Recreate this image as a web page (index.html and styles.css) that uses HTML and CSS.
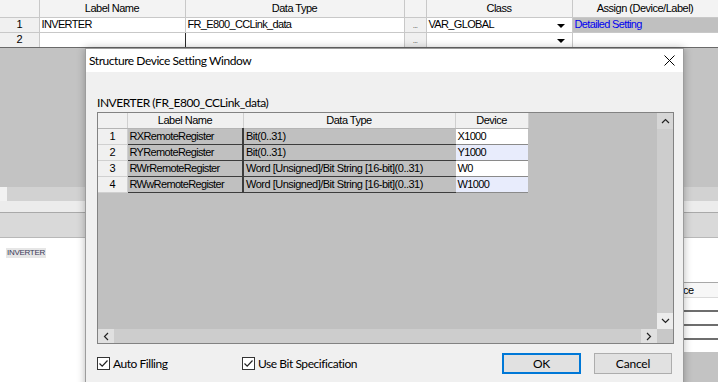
FILE: index.html
```html
<!DOCTYPE html>
<html>
<head lang="en">
  <meta charset="UTF-8">
  <title>Structure Device Setting Window</title>
  <link rel="stylesheet" href="styles.css">
</head>
<body>
<div class="app">
  <table class="labels">
    <colgroup>
      <col style="width:39px"><col style="width:146px"><col style="width:219px">
      <col style="width:22px"><col style="width:146px"><col style="width:146px">
    </colgroup>
    <tr class="head">
      <th></th><th>Label Name</th><th>Data Type</th><th></th><th>Class</th><th>Assign (Device/Label)</th>
    </tr>
    <tr>
      <td class="no">1</td>
      <td>INVERTER</td>
      <td>FR_E800_CCLink_data</td>
      <td class="btn">...</td>
      <td class="cls">VAR_GLOBAL<span class="drop"></span></td>
      <td class="assign set">Detailed Setting</td>
    </tr>
    <tr class="edit">
      <td class="no">2</td>
      <td class="lbl"></td>
      <td></td>
      <td class="btn">...</td>
      <td class="cls"><span class="drop"></span></td>
      <td class="assign"></td>
    </tr>
  </table>

  <div class="workspace"></div>

  <div class="lower">
    <div class="tabs"><span class="tab"></span></div>
    <div class="band1"></div>
    <div class="band2"></div>
    <div class="panes">
      <div class="list"><span class="tag">INVERTER</span></div>
      <div class="props">
        <div class="gap"></div>
        <table class="ptable">
          <tr class="phead"><th></th><th>Device</th></tr>
          <tr><td></td><td></td></tr>
          <tr><td></td><td></td></tr>
          <tr><td></td><td></td></tr>
          <tr class="blank"><td></td><td></td></tr>
        </table>
        <div class="fill"></div>
      </div>
    </div>
  </div>
</div>

<div class="dialog">
  <div class="titlebar">
    <span class="title">Structure Device Setting Window</span>
    <svg class="close" width="11" height="11" viewBox="0 0 11 11">
      <path d="M0.5 0.5 L10.5 10.5 M10.5 0.5 L0.5 10.5" stroke="#000" stroke-width="1" fill="none"/>
    </svg>
  </div>
  <div class="content">
    <div class="caption">INVERTER (FR_E800_CCLink_data)</div>
    <div class="frame">
      <div class="gridarea">
        <table class="members">
          <colgroup>
            <col style="width:29px"><col style="width:116px"><col style="width:212px"><col style="width:73px">
          </colgroup>
          <tr class="mhead"><th></th><th>Label Name</th><th>Data Type</th><th>Device</th></tr>
          <tr class="first">
            <td class="no">1</td><td class="mname">RXRemoteRegister</td><td class="mtype">Bit(0..31)</td><td class="dev">X1000</td>
          </tr>
          <tr>
            <td class="no">2</td><td class="mname">RYRemoteRegister</td><td class="mtype">Bit(0..31)</td><td class="dev alt">Y1000</td>
          </tr>
          <tr class="dark">
            <td class="no">3</td><td class="mname">RWrRemoteRegister</td><td class="mtype">Word [Unsigned]/Bit String [16-bit](0..31)</td><td class="dev">W0</td>
          </tr>
          <tr class="dark">
            <td class="no">4</td><td class="mname">RWwRemoteRegister</td><td class="mtype">Word [Unsigned]/Bit String [16-bit](0..31)</td><td class="dev alt">W1000</td>
          </tr>
        </table>
      </div>
      <div class="vscroll">
        <span class="arrow">
          <svg width="9" height="6" viewBox="0 0 9 6"><path d="M1 5 L4.5 1.5 L8 5" stroke="#222" stroke-width="1.2" fill="none"/></svg>
        </span>
        <span class="arrow">
          <svg width="9" height="6" viewBox="0 0 9 6"><path d="M1 1 L4.5 4.5 L8 1" stroke="#222" stroke-width="1.2" fill="none"/></svg>
        </span>
      </div>
      <div class="hscroll">
        <span class="arrow">
          <svg width="6" height="9" viewBox="0 0 6 9"><path d="M5 1 L1.5 4.5 L5 8" stroke="#222" stroke-width="1.2" fill="none"/></svg>
        </span>
        <span class="arrow">
          <svg width="6" height="9" viewBox="0 0 6 9"><path d="M1 1 L4.5 4.5 L1 8" stroke="#222" stroke-width="1.2" fill="none"/></svg>
        </span>
      </div>
      <div class="corner"></div>
    </div>
    <div class="footer">
      <label class="check auto">
        <span class="box"><svg width="11" height="11" viewBox="0 0 11 11"><path d="M1.5 5.5 L4.2 8.2 L9.5 2.5" stroke="#222" stroke-width="1.2" fill="none"/></svg></span>
        Auto Filling
      </label>
      <label class="check">
        <span class="box"><svg width="11" height="11" viewBox="0 0 11 11"><path d="M1.5 5.5 L4.2 8.2 L9.5 2.5" stroke="#222" stroke-width="1.2" fill="none"/></svg></span>
        Use Bit Specification
      </label>
      <div class="buttons">
        <button class="ok">OK</button>
        <button>Cancel</button>
      </div>
    </div>
  </div>
</div>
</body>
</html>
```

FILE: styles.css
```css
* {
  margin: 0;
  padding: 0;
  box-sizing: border-box;
}

body {
  width: 718px;
  height: 382px;
  overflow: hidden;
  background: #c3c3c3;
  font-family: "Liberation Sans", Arial, sans-serif;
  font-size: 11px;
  color: #000;
}

.app {
  height: 382px;
  display: flex;
  flex-direction: column;
}

/* label grid behind the dialog */
.labels {
  width: 718px;
  table-layout: fixed;
  border-collapse: collapse;
  background: #fff;
}

.labels th,
.labels td {
  height: 15px;
  padding: 0 2px;
  border-right: 1px solid #c8c8c8;
  border-bottom: 1px solid #c8c8c8;
  white-space: nowrap;
  overflow: hidden;
  font-weight: normal;
  text-align: left;
  letter-spacing: -0.65px;
  line-height: 13px;
}

.labels .head th {
  height: 17px;
  background: #f3f3f3;
  text-align: center;
  letter-spacing: -0.5px;
}

.labels .no {
  background: #f0f0f0;
  text-align: center;
}

.labels .btn {
  background: #f0f0f0;
  text-align: center;
  font-size: 8px;
  vertical-align: bottom;
  color: #555;
}

.labels .cls {
  position: relative;
}

.drop {
  position: absolute;
  right: 7px;
  top: 6px;
  border-left: 4px solid transparent;
  border-right: 4px solid transparent;
  border-top: 4px solid #000;
}

.labels .assign.set {
  background: #c0c0c0;
  color: #0000f0;
  border-top: 1px solid #808080;
  border-left: 1px solid #808080;
}

.labels .edit td {
  border-top: 1px solid #2c2c2c;
  border-bottom: 1px solid #6a6a6a;
}

.labels .edit .no {
  border-top-color: #c8c8c8;
}

.labels .edit .lbl {
  border-right: 1px solid #2c2c2c;
}

.labels .edit .assign {
  border-left: 1px solid #2c2c2c;
}

.workspace {
  height: 139px;
  background: #c3c3c3;
}

.lower {
  flex: 1;
  display: flex;
  flex-direction: column;
}

.tabs {
  height: 14px;
  background: #d2d2d2;
}

.tab {
  display: block;
  width: 7px;
  height: 14px;
  background: #f2f2f2;
}

.band1 {
  height: 12px;
  background: #ececec;
  border-bottom: 1px solid #a9a9a9;
}

.band2 {
  height: 25px;
  background: #d9d9d9;
  border-bottom: 1px solid #b8b8b8;
}

.panes {
  flex: 1;
  display: flex;
}

.list {
  flex: 1;
  background: #fff;
  padding: 10px 0 0 6px;
}

.tag {
  display: block;
  width: fit-content;
  padding: 0 1px;
  background: #e6e6e6;
  color: #3a3a58;
  font-size: 8px;
  line-height: 10px;
  letter-spacing: -0.3px;
}

.props {
  width: 160px;
  display: flex;
  flex-direction: column;
  background: #c3c3c3;
}

.props .gap {
  height: 44px;
  background: #fff;
}

.ptable {
  width: 160px;
  table-layout: fixed;
  border-collapse: collapse;
  background: #fff;
}

.ptable th,
.ptable td {
  height: 14px;
  border-bottom: 2px solid #6e6e6e;
}

.ptable th:first-child,
.ptable td:first-child {
  width: 80px;
}

.ptable .phead th {
  height: 15px;
  background: #f7f7f7;
  border-top: 1px solid #a8a8a8;
  border-bottom: 1px solid #dadada;
  font-weight: normal;
  font-size: 11px;
  letter-spacing: -0.3px;
}

.ptable .blank td {
  height: 13px;
  border-bottom: none;
}

.props .fill {
  flex: 1;
  margin-top: 2px;
  background: #c3c3c3;
}

/* dialog */
.dialog {
  position: absolute;
  left: 85px;
  top: 48px;
  width: 599px;
  height: 350px;
  background: #f0f0f0;
  border: 1px solid #9c9c9c;
  box-shadow: 0 0 8px rgba(0, 0, 0, 0.28);
  font-family: Lato, "Liberation Sans", sans-serif;
  font-size: 12px;
  letter-spacing: -0.45px;
}

.titlebar {
  height: 23px;
  background: #fff;
  display: flex;
  align-items: center;
  justify-content: space-between;
  padding: 0 8px 0 3px;
}

.close {
  display: block;
}

.content {
  padding: 0 9px 0 11px;
}

.caption {
  margin-top: 23px;
  margin-bottom: 1px;
  height: 16px;
  line-height: 16px;
}

.frame {
  height: 232px;
  border: 1px solid #828282;
  display: grid;
  grid-template-columns: 1fr 16px;
  grid-template-rows: 1fr 14px;
  background: #c0c0c0;
}

.gridarea {
  background: #c0c0c0;
  overflow: hidden;
}

.members {
  width: 430px;
  table-layout: fixed;
  border-collapse: collapse;
  font-family: "Liberation Sans", Arial, sans-serif;
  font-size: 11px;
  letter-spacing: -0.65px;
}

.members th,
.members td {
  height: 16px;
  padding: 0 2px;
  white-space: nowrap;
  overflow: hidden;
  font-weight: normal;
  text-align: left;
}

.members .mhead th {
  height: 15px;
  background: #f0f0f0;
  text-align: center;
  letter-spacing: -0.5px;
  border-right: 1px solid #cfcfcf;
  border-bottom: 1px solid #b4b4b4;
}

.members .no {
  background: #f0f0f0;
  text-align: center;
  border-bottom: 1px solid #d0d0d0;
  border-right: 1px solid #cfcfcf;
}

.members .mname,
.members .mtype {
  background: #c0c0c0;
  border-top: 1px solid #9a9a9a;
  border-bottom: 1px solid #3c3c3c;
}

.members .mname {
  border-left: 1px solid #8a8a8a;
  border-right: 2px solid #3c3c3c;
}

.members .mtype {
  border-right: 1px solid #c0c0c0;
  letter-spacing: -0.5px;
}

.members .dev {
  background: #fff;
  border-bottom: 1px solid #8a8a8a;
}

.members .dev.alt {
  background: #e8ecfc;
}

.members .dark td {
  border-top: 1px solid #1e1e1e;
}

.members .dark .no {
  border-top-color: #d0d0d0;
}

.vscroll {
  background: #cdcdcd;
  display: flex;
  flex-direction: column;
  justify-content: space-between;
}

.vscroll .arrow {
  height: 16px;
  display: flex;
  align-items: center;
  justify-content: center;
  background: #ececec;
}

.vscroll .arrow:first-child {
  background: #d6d6d6;
}

.hscroll {
  background: #cdcdcd;
  display: flex;
  justify-content: space-between;
}

.hscroll .arrow {
  width: 16px;
  display: flex;
  align-items: center;
  justify-content: center;
  background: #e0e0e0;
}

.corner {
  background: #c8c8c8;
}

.footer {
  display: flex;
  align-items: center;
  height: 37px;
  padding-top: 2px;
}

.check {
  display: flex;
  align-items: center;
  gap: 3px;
}

.check.auto {
  width: 145px;
}

.box {
  width: 13px;
  height: 13px;
  border: 1px solid #333;
  background: #fff;
  display: flex;
  align-items: center;
  justify-content: center;
}

.buttons {
  margin-left: auto;
  margin-right: 2px;
  display: flex;
  gap: 13px;
}

.buttons button {
  width: 78px;
  height: 21px;
  font-family: Lato, "Liberation Sans", sans-serif;
  font-size: 12px;
  letter-spacing: -0.2px;
  background: #e1e1e1;
  border: 1px solid #adadad;
  color: #000;
}

.buttons .ok {
  width: 79px;
  border: 2px solid #0078d7;
}
```
